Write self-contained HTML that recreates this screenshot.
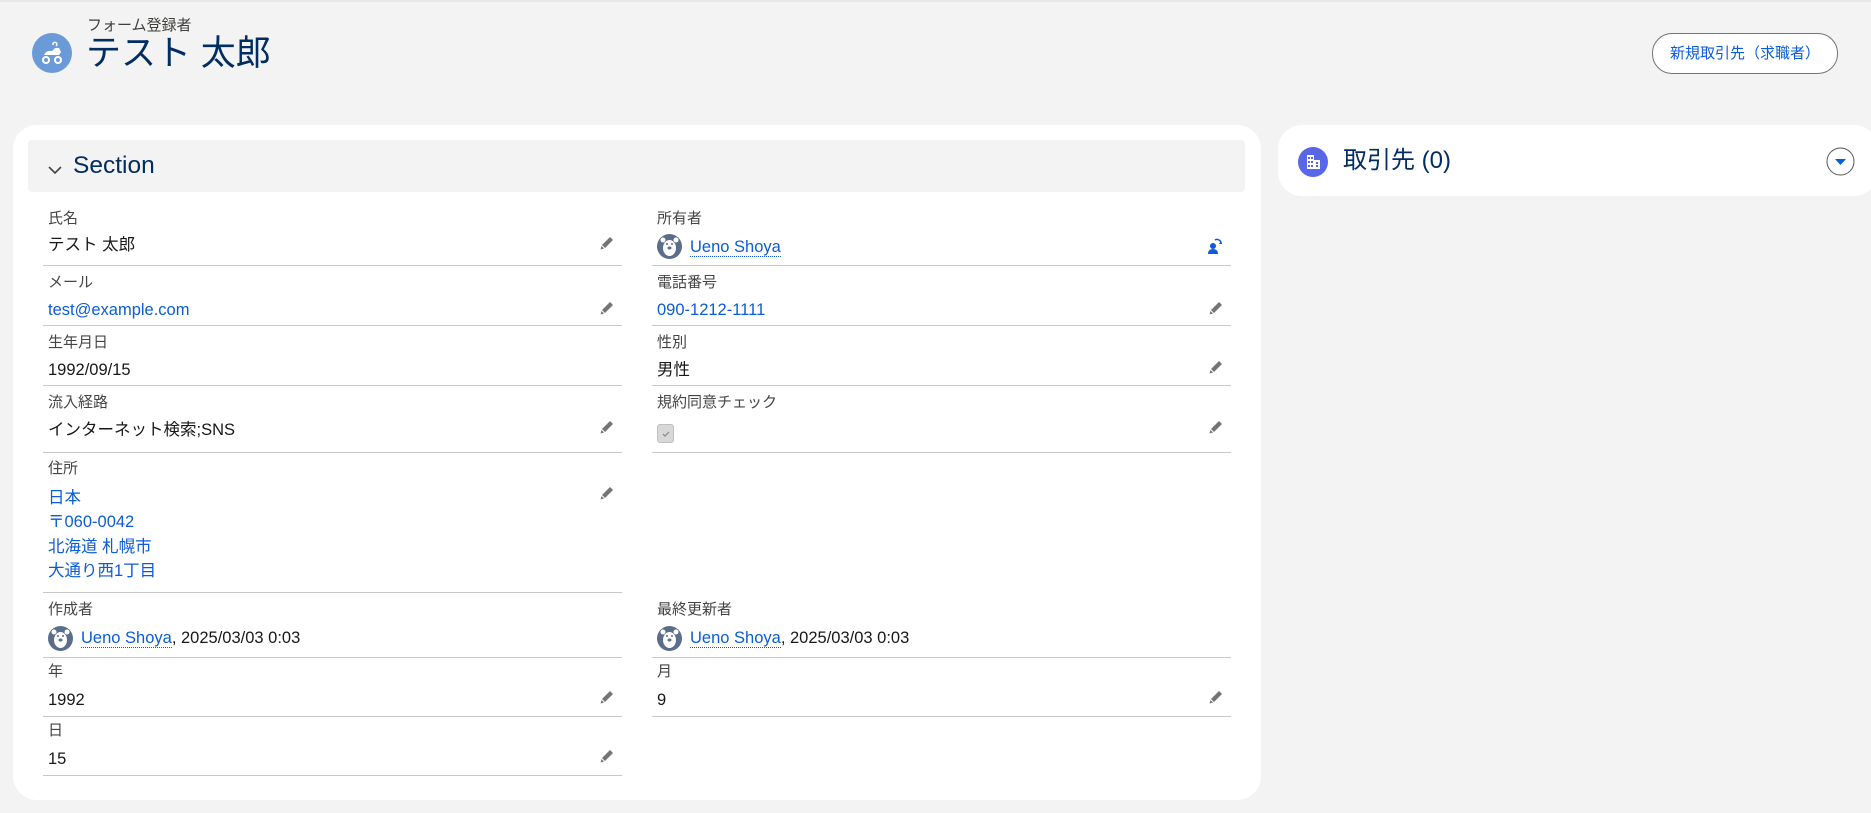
<!DOCTYPE html>
<html><head><meta charset="utf-8">
<style>
*{margin:0;padding:0;box-sizing:border-box}
body{width:1871px;height:813px;background:#f3f3f3;font-family:"Liberation Sans","Noto Sans CJK JP",sans-serif;position:relative;overflow:hidden;color:#181818}
.a{position:absolute;white-space:nowrap}
.lbl{font-size:15px;color:#444;line-height:18px}
.val{font-size:16.5px;color:#181818;line-height:20px}
.lnk{color:#0b5cd5}
.hr{position:absolute;height:1px;background:#c9c9c9}
.pen{position:absolute;width:16px;height:16px}
.av{position:absolute;width:25px;height:25px}
.ul{border-bottom:1px dotted #0b5cd5}
</style></head><body>
<div class="a" style="left:0;top:0;width:1871px;height:2px;background:#e8e8e8"></div>
<svg class="a" style="left:32px;top:33px" width="40" height="40" viewBox="0 0 40 40"><circle cx="20" cy="20" r="20" fill="#6a9bd8"/><path d="M12 22 q2-5 8-4 l3-3 h4 l2 4 l-2 3 h-15z" fill="#fff"/><path d="M21 12 a2 2 0 1 1 3 1" stroke="#fff" stroke-width="1.5" fill="none"/><circle cx="14" cy="27" r="3" fill="none" stroke="#fff" stroke-width="2"/><circle cx="26" cy="27" r="3" fill="none" stroke="#fff" stroke-width="2"/></svg>
<div class="a" style="left:87px;top:14px;font-size:15px;color:#3e3e3c">フォーム登録者</div>
<div class="a" style="left:86px;top:33px;font-size:35px;color:#032d60;line-height:42px">テスト 太郎</div>
<div class="a" style="left:1652px;top:33px;width:186px;height:41px;border:1px solid #747474;border-radius:20px;background:#fff;color:#0b5cd5;font-size:15px;line-height:39px;text-align:center">新規取引先（求職者）</div>

<div class="a" style="left:13px;top:125px;width:1248px;height:675px;background:#fff;border-radius:24px"></div>
<div class="a" style="left:28px;top:140px;width:1217px;height:52px;background:#f3f3f3;border-radius:4px"></div>
<svg class="a" style="left:47px;top:164px" width="16" height="12" viewBox="0 0 16 12"><path d="M2 3 L8 9 L14 3" stroke="#444" stroke-width="1.6" fill="none"/></svg>
<div class="a" style="left:73px;top:152px;font-size:24.5px;color:#032d60;line-height:28px">Section</div>

<div class="a" style="left:1278px;top:125px;width:600px;height:71px;background:#fff;border-radius:24px"></div>
<svg class="a" style="left:1298px;top:147px" width="30" height="30" viewBox="0 0 30 30"><circle cx="15" cy="15" r="15" fill="#5867e8"/><rect x="9" y="8" width="7" height="14" fill="#fff"/><rect x="16" y="13" width="6" height="9" fill="#fff"/><g fill="#5867e8"><rect x="10" y="10" width="2" height="2"/><rect x="13" y="10" width="2" height="2"/><rect x="10" y="14" width="2" height="2"/><rect x="13" y="14" width="2" height="2"/><rect x="10" y="18" width="2" height="2"/><rect x="13" y="18" width="2" height="2"/><rect x="18" y="15" width="2" height="2"/><rect x="18" y="18" width="2" height="2"/></g></svg>
<div class="a" style="left:1343px;top:146px;font-size:24px;color:#032d60;line-height:30px">取引先 (0)</div>
<svg class="a" style="left:1826px;top:147px" width="29" height="29" viewBox="0 0 29 29"><circle cx="14.5" cy="14.5" r="13.5" fill="#fff" stroke="#555" stroke-width="1"/><path d="M9 12 h11 l-5.5 6z" fill="#0b5cd5"/></svg>

<svg width="0" height="0" style="position:absolute"><defs>
<symbol id="p" viewBox="0 0 16 16"><path d="M11 2 L14 5 L6 13 L3 10 Z" fill="#747474"/><path d="M2.5 11 L5 13.5 L1.5 14.5 Z" fill="#747474"/></symbol>
<symbol id="b" viewBox="0 0 25 25"><circle cx="12.5" cy="12.5" r="12.5" fill="#5a6e8c"/><circle cx="6" cy="6" r="2.5" fill="#fff"/><circle cx="19" cy="6" r="2.5" fill="#fff"/><ellipse cx="12.5" cy="14" rx="6.5" ry="8" fill="#fff"/><circle cx="10" cy="10" r="1" fill="#5a6e8c"/><circle cx="15" cy="10" r="1" fill="#5a6e8c"/><ellipse cx="12.5" cy="14" rx="2" ry="1.5" fill="#5a6e8c"/></symbol>
</defs></svg>

<!-- left column -->
<div class="a lbl" style="left:48px;top:210px">氏名</div>
<div class="a val" style="left:48px;top:235px">テスト 太郎</div>
<svg class="pen" style="left:599px;top:235px"><use href="#p"/></svg>
<div class="hr" style="left:43px;top:265px;width:579px"></div>

<div class="a lbl" style="left:48px;top:274px">メール</div>
<div class="a val lnk" style="left:48px;top:300px">test@example.com</div>
<svg class="pen" style="left:599px;top:300px"><use href="#p"/></svg>
<div class="hr" style="left:43px;top:325px;width:579px"></div>

<div class="a lbl" style="left:48px;top:334px">生年月日</div>
<div class="a val" style="left:48px;top:360px">1992/09/15</div>
<div class="hr" style="left:43px;top:385px;width:579px"></div>

<div class="a lbl" style="left:48px;top:394px">流入経路</div>
<div class="a val" style="left:48px;top:420px">インターネット検索;SNS</div>
<svg class="pen" style="left:599px;top:419px"><use href="#p"/></svg>
<div class="hr" style="left:43px;top:452px;width:579px"></div>

<div class="a lbl" style="left:48px;top:460px">住所</div>
<div class="a val lnk" style="left:48px;top:486px;line-height:24.3px">日本<br>〒060-0042<br>北海道 札幌市<br>大通り西1丁目</div>
<svg class="pen" style="left:599px;top:485px"><use href="#p"/></svg>
<div class="hr" style="left:43px;top:592px;width:579px"></div>

<div class="a lbl" style="left:48px;top:601px">作成者</div>
<svg class="av" style="left:48px;top:626px"><use href="#b"/></svg>
<div class="a val" style="left:81px;top:628px"><span class="lnk ul">Ueno Shoya</span>, 2025/03/03 0:03</div>
<div class="hr" style="left:43px;top:657px;width:579px"></div>

<div class="a lbl" style="left:48px;top:663px">年</div>
<div class="a val" style="left:48px;top:690px">1992</div>
<svg class="pen" style="left:599px;top:689px"><use href="#p"/></svg>
<div class="hr" style="left:43px;top:716px;width:579px"></div>

<div class="a lbl" style="left:48px;top:722px">日</div>
<div class="a val" style="left:48px;top:749px">15</div>
<svg class="pen" style="left:599px;top:748px"><use href="#p"/></svg>
<div class="hr" style="left:43px;top:775px;width:579px"></div>

<!-- right column -->
<div class="a lbl" style="left:657px;top:210px">所有者</div>
<svg class="av" style="left:657px;top:234px"><use href="#b"/></svg>
<div class="a val" style="left:690px;top:237px"><span class="lnk ul">Ueno Shoya</span></div>
<svg class="a" style="left:1206px;top:237px" width="18" height="18" viewBox="0 0 18 18"><circle cx="7" cy="9" r="3" fill="#0b5cd5"/><path d="M2 17 q0-5 5-5 q5 0 5 5z" fill="#0b5cd5"/><path d="M9 3 a4 4 0 0 1 6 4" stroke="#0b5cd5" stroke-width="1.5" fill="none"/><path d="M13 7 l3 0 -1 -3z" fill="#0b5cd5"/></svg>
<div class="hr" style="left:652px;top:265px;width:579px"></div>

<div class="a lbl" style="left:657px;top:274px">電話番号</div>
<div class="a val lnk" style="left:657px;top:300px">090-1212-1111</div>
<svg class="pen" style="left:1208px;top:300px"><use href="#p"/></svg>
<div class="hr" style="left:652px;top:325px;width:579px"></div>

<div class="a lbl" style="left:657px;top:334px">性別</div>
<div class="a val" style="left:657px;top:360px">男性</div>
<svg class="pen" style="left:1208px;top:359px"><use href="#p"/></svg>
<div class="hr" style="left:652px;top:385px;width:579px"></div>

<div class="a lbl" style="left:657px;top:394px">規約同意チェック</div>
<div class="a" style="left:657px;top:424px;width:17px;height:19px;background:#d8d8d8;border:1px solid #c0c0c0;border-radius:3px"></div>
<svg class="a" style="left:660px;top:428px" width="12" height="12" viewBox="0 0 12 12"><path d="M3 6 l2 2 l4-4" stroke="#888" stroke-width="1.2" fill="none"/></svg>
<svg class="pen" style="left:1208px;top:419px"><use href="#p"/></svg>
<div class="hr" style="left:652px;top:452px;width:579px"></div>

<div class="a lbl" style="left:657px;top:601px">最終更新者</div>
<svg class="av" style="left:657px;top:626px"><use href="#b"/></svg>
<div class="a val" style="left:690px;top:628px"><span class="lnk ul">Ueno Shoya</span>, 2025/03/03 0:03</div>
<div class="hr" style="left:652px;top:657px;width:579px"></div>

<div class="a lbl" style="left:657px;top:663px">月</div>
<div class="a val" style="left:657px;top:690px">9</div>
<svg class="pen" style="left:1208px;top:689px"><use href="#p"/></svg>
<div class="hr" style="left:652px;top:716px;width:579px"></div>
</body></html>
